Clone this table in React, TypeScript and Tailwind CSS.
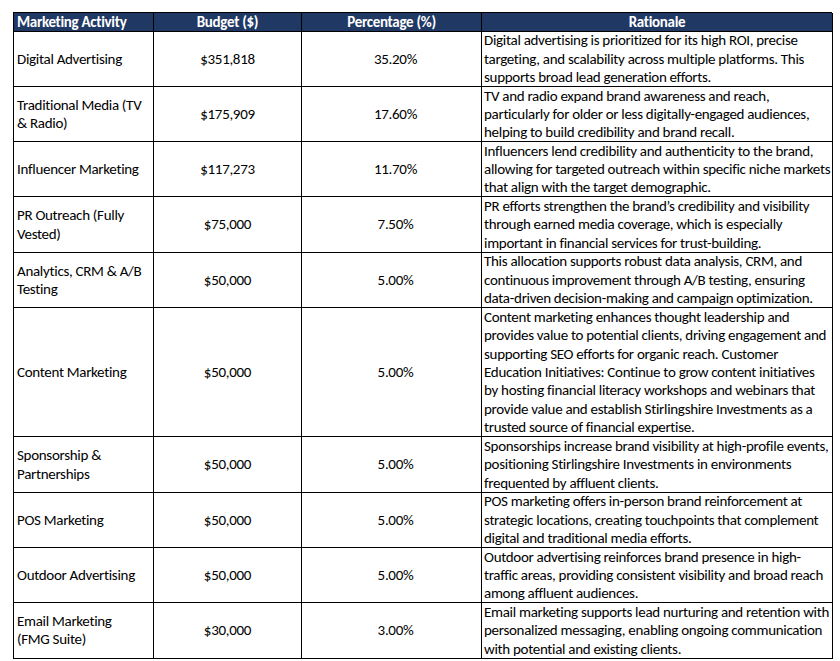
const rows: { activity: string[]; budget: string; pct: string; rationale: string[] }[] = [
  {
    activity: ["Digital Advertising"],
    budget: "$351,818",
    pct: "35.20%",
    rationale: [
      "Digital advertising is prioritized for its high ROI, precise",
      "targeting, and scalability across multiple platforms. This",
      "supports broad lead generation efforts.",
    ],
  },
  {
    activity: ["Traditional Media (TV", "& Radio)"],
    budget: "$175,909",
    pct: "17.60%",
    rationale: [
      "TV and radio expand brand awareness and reach,",
      "particularly for older or less digitally-engaged audiences,",
      "helping to build credibility and brand recall.",
    ],
  },
  {
    activity: ["Influencer Marketing"],
    budget: "$117,273",
    pct: "11.70%",
    rationale: [
      "Influencers lend credibility and authenticity to the brand,",
      "allowing for targeted outreach within specific niche markets",
      "that align with the target demographic.",
    ],
  },
  {
    activity: ["PR Outreach (Fully", "Vested)"],
    budget: "$75,000",
    pct: "7.50%",
    rationale: [
      "PR efforts strengthen the brand\u2019s credibility and visibility",
      "through earned media coverage, which is especially",
      "important in financial services for trust-building.",
    ],
  },
  {
    activity: ["Analytics, CRM & A/B", "Testing"],
    budget: "$50,000",
    pct: "5.00%",
    rationale: [
      "This allocation supports robust data analysis, CRM, and",
      "continuous improvement through A/B testing, ensuring",
      "data-driven decision-making and campaign optimization.",
    ],
  },
  {
    activity: ["Content Marketing"],
    budget: "$50,000",
    pct: "5.00%",
    rationale: [
      "Content marketing enhances thought leadership and",
      "provides value to potential clients, driving engagement and",
      "supporting SEO efforts for organic reach. Customer",
      "Education Initiatives: Continue to grow content initiatives",
      "by hosting financial literacy workshops and webinars that",
      "provide value and establish Stirlingshire Investments as a",
      "trusted source of financial expertise.",
    ],
  },
  {
    activity: ["Sponsorship &", "Partnerships"],
    budget: "$50,000",
    pct: "5.00%",
    rationale: [
      "Sponsorships increase brand visibility at high-profile events,",
      "positioning Stirlingshire Investments in environments",
      "frequented by affluent clients.",
    ],
  },
  {
    activity: ["POS Marketing"],
    budget: "$50,000",
    pct: "5.00%",
    rationale: [
      "POS marketing offers in-person brand reinforcement at",
      "strategic locations, creating touchpoints that complement",
      "digital and traditional media efforts.",
    ],
  },
  {
    activity: ["Outdoor Advertising"],
    budget: "$50,000",
    pct: "5.00%",
    rationale: [
      "Outdoor advertising reinforces brand presence in high-",
      "traffic areas, providing consistent visibility and broad reach",
      "among affluent audiences.",
    ],
  },
  {
    activity: ["Email Marketing", "(FMG Suite)"],
    budget: "$30,000",
    pct: "3.00%",
    rationale: [
      "Email marketing supports lead nurturing and retention with",
      "personalized messaging, enabling ongoing communication",
      "with potential and existing clients.",
    ],
  },
];

const cell = "flex flex-col justify-center border-r border-b border-black";

function Lines({ lines }: { lines: string[] }) {
  return (
    <>
      {lines.map((l, i) => (
        <div key={i} className="whitespace-nowrap">
          {l}
        </div>
      ))}
    </>
  );
}

export default function App() {
  return (
    <div
      className="min-h-[661px] w-[840px] bg-white pl-[13px] pt-[12px] text-[15px] leading-[18.3px] tracking-[-0.02em] text-black"
      style={{ fontFamily: "Carlito, Lato, 'Liberation Sans', sans-serif" }}
    >
      <div className="grid w-[819px] grid-cols-[140px_148px_180px_351px] grid-rows-[18.6px_55.3px_55.3px_55.3px_55.3px_55.3px_129.3px_55.3px_55.3px_55.3px_55.3px] border-t border-l border-black">
        <div className={`${cell} bg-[#1f3864] px-[3px] font-bold text-white`}>Marketing Activity</div>
        <div className={`${cell} items-center bg-[#1f3864] font-bold text-white`}>Budget ($)</div>
        <div className={`${cell} items-center bg-[#1f3864] font-bold text-white`}>Percentage (%)</div>
        <div className={`${cell} items-center bg-[#1f3864] font-bold text-white`}>Rationale</div>
        {rows.map((r) => (
          <>
            <div className={`${cell} px-[3px]`}>
              <Lines lines={r.activity} />
            </div>
            <div className={`${cell} items-center`}>{r.budget}</div>
            <div className={`${cell} items-center pl-[8px]`}>{r.pct}</div>
            <div className={`${cell} px-[2px]`}>
              <Lines lines={r.rationale} />
            </div>
          </>
        ))}
      </div>
    </div>
  );
}
